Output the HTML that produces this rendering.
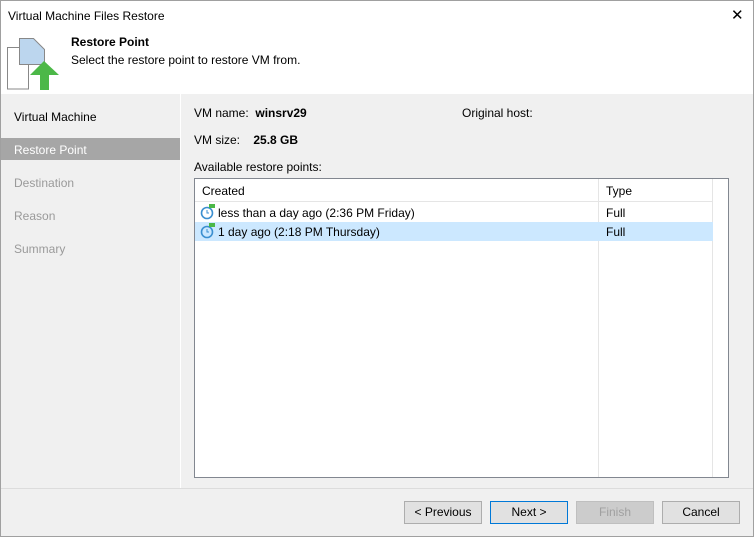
<!DOCTYPE html>
<html><head><style>
body{margin:0;width:754px;height:537px;overflow:hidden;font-family:"Liberation Sans",sans-serif;font-size:12px;color:#000;position:relative;background:#f0f0f0}
.a{position:absolute}
.win{position:absolute;left:0;top:0;width:752px;height:535px;border:1px solid #a0a0a0}
.btn{position:absolute;top:501px;width:76px;height:21px;border:1px solid #adadad;background:#e1e1e1;text-align:center;line-height:21px}
.nav{position:absolute;left:14px;color:#9a9a9a}
</style></head><body>
<div class="win"></div>
<div class="a" style="left:1px;top:1px;width:752px;height:93px;background:#fff"></div>
<div class="a" style="left:8px;top:9px">Virtual Machine Files Restore</div>
<div class="a" style="left:731px;top:6px;font-size:15px">✕</div>
<svg class="a" style="left:6px;top:36px" width="56" height="56">
<path d="M1.5 11.5h14l7 7v34.5h-21z" fill="#fff" stroke="#888"/>
<path d="M13.5 2.5h14l11 11v15h-25z" fill="#bcd6ee" stroke="#888"/>
<path d="M38 25l-14 14h10v15h9v-15h10z" fill="#4cb848"/>
</svg>
<div class="a" style="left:71px;top:35px;font-weight:bold">Restore Point</div>
<div class="a" style="left:71px;top:53px">Select the restore point to restore VM from.</div>
<div class="a" style="left:180px;top:94px;width:1px;height:394px;background:#fff"></div>
<div class="nav" style="top:110px;color:#000">Virtual Machine</div>
<div class="a" style="left:1px;top:138px;width:179px;height:22px;background:#a6a6a6"></div>
<div class="nav" style="top:143px;color:#fff">Restore Point</div>
<div class="nav" style="top:176px">Destination</div>
<div class="nav" style="top:209px">Reason</div>
<div class="nav" style="top:242px">Summary</div>
<div class="a" style="left:194px;top:106px">VM name:&nbsp; <b>winsrv29</b></div>
<div class="a" style="left:462px;top:106px">Original host:</div>
<div class="a" style="left:194px;top:133px">VM size:&nbsp;&nbsp;&nbsp; <b>25.8 GB</b></div>
<div class="a" style="left:194px;top:160px">Available restore points:</div>
<div class="a" style="left:194px;top:178px;width:533px;height:298px;background:#fff;border:1px solid #828790"></div>
<div class="a" style="left:598px;top:179px;width:1px;height:298px;background:#e5e5e5"></div>
<div class="a" style="left:712px;top:179px;width:1px;height:298px;background:#e5e5e5"></div>
<div class="a" style="left:195px;top:201px;width:517px;height:1px;background:#e5e5e5"></div>
<div class="a" style="left:202px;top:184px">Created</div>
<div class="a" style="left:606px;top:184px">Type</div>
<div class="a" style="left:195px;top:222px;width:518px;height:19px;background:#cce8ff"></div>
<svg class="a" style="left:199px;top:203px" width="18" height="17"><circle cx="8" cy="10" r="5.5" fill="none" stroke="#3b8fd0" stroke-width="1.6"/><path d="M8 7v3h2" stroke="#3b8fd0" fill="none"/><path d="M10 1h6v4h-6z" fill="#4cb848"/></svg>
<svg class="a" style="left:199px;top:222px" width="18" height="17"><circle cx="8" cy="10" r="5.5" fill="none" stroke="#3b8fd0" stroke-width="1.6"/><path d="M8 7v3h2" stroke="#3b8fd0" fill="none"/><path d="M10 1h6v4h-6z" fill="#4cb848"/></svg>
<div class="a" style="left:218px;top:206px">less than a day ago (2:36 PM Friday)</div>
<div class="a" style="left:606px;top:206px">Full</div>
<div class="a" style="left:218px;top:225px">1 day ago (2:18 PM Thursday)</div>
<div class="a" style="left:606px;top:225px">Full</div>
<div class="a" style="left:1px;top:488px;width:752px;height:1px;background:#dcdcdc"></div>
<div class="btn" style="left:404px">&lt; Previous</div>
<div class="btn" style="left:490px;border-color:#0078d7">Next &gt;</div>
<div class="btn" style="left:576px;color:#a0a0a0;border-color:#bfbfbf;background:#ccc">Finish</div>
<div class="btn" style="left:662px">Cancel</div>
</body></html>
